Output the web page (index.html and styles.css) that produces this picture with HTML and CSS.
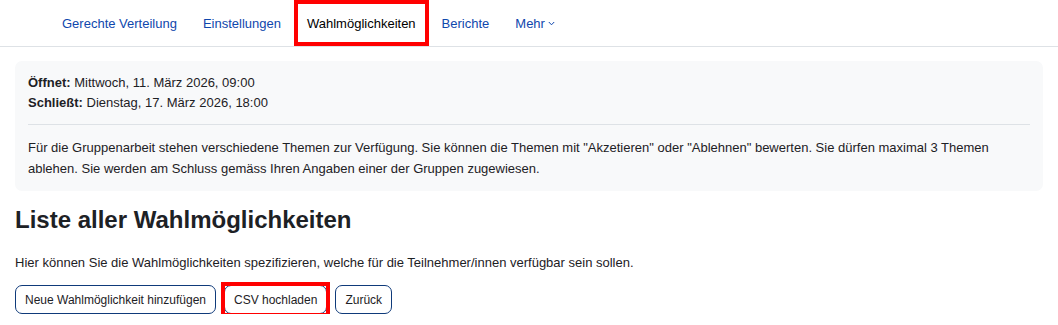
FILE: index.html
```html
<!DOCTYPE html>
<html lang="de">
<head>
  <meta charset="UTF-8" />
  <title>Wahlmöglichkeiten</title>
  <link rel="stylesheet" href="styles.css">
</head>
<body>

<nav class="secondary-nav">
  <ul>
    <li><a href="#">Gerechte Verteilung</a></li>
    <li><a href="#">Einstellungen</a></li>
    <li><a href="#" class="active marked">Wahlmöglichkeiten</a></li>
    <li><a href="#">Berichte</a></li>
    <li><a href="#">Mehr <span class="caret"><svg width="7" height="5" viewBox="0 0 7 5"><path d="M0.8 1 L3.5 3.8 L6.2 1" fill="none" stroke="currentColor" stroke-width="1"/></svg></span></a></li>
  </ul>
</nav>

<main>
  <div class="activity-info">
    <div class="dates">
      <div><strong>Öffnet:</strong> Mittwoch, 11. März 2026, 09:00</div>
      <div><strong>Schließt:</strong> Dienstag, 17. März 2026, 18:00</div>
    </div>
    <hr>
    <p>Für die Gruppenarbeit stehen verschiedene Themen zur Verfügung. Sie können die Themen mit "Akzetieren" oder "Ablehnen" bewerten. Sie dürfen maximal 3 Themen ablehen. Sie werden am Schluss gemäss Ihren Angaben einer der Gruppen zugewiesen.</p>
  </div>

  <h2>Liste aller Wahlmöglichkeiten</h2>
  <p class="intro">Hier können Sie die Wahlmöglichkeiten spezifizieren, welche für die Teilnehmer/innen verfügbar sein sollen.</p>

  <div class="actions">
    <button class="btn">Neue Wahlmöglichkeit hinzufügen</button>
    <span class="marked-wrap"><button class="btn">CSV hochladen</button></span>
    <button class="btn">Zurück</button>
  </div>
</main>

</body>
</html>
```

FILE: styles.css
```css
:root {
  --text-color: #1d2125;
  --link-color: #0f47ad;
  --border-light: #dee2e6;
  --box-bg: #f8f9fa;
  --mark: #ff0000;
}

body {
  margin: 0;
  font-family: "Liberation Sans", Arial, sans-serif;
  font-size: 13px;
  color: var(--text-color);
  background: #fff;
}

.secondary-nav {
  border-bottom: 1px solid var(--border-light);
}

.secondary-nav ul {
  list-style: none;
  margin: 0;
  padding: 0 0 0 49px;
  display: flex;
}

.secondary-nav a {
  display: flex;
  align-items: center;
  height: 46px;
  padding: 0 13px 0 13px;
  color: var(--link-color);
  text-decoration: none;
  box-sizing: border-box;
}

.secondary-nav a.active {
  color: #000;
}

.marked {
  outline: 4px solid var(--mark);
  outline-offset: -4px;
}

.caret {
  display: inline-flex;
  margin-left: 3px;
  margin-top: 1px;
}

main {
  padding: 14px 15px 0 15px;
}

.activity-info {
  background: var(--box-bg);
  border-radius: 7px;
  padding: 12px 13px 12px 13px;
}

.dates {
  line-height: 20px;
}

.activity-info hr {
  border: 0;
  border-top: 1px solid var(--border-light);
  margin: 11px 0 12px 0;
}

.activity-info p {
  margin: 0;
  line-height: 21px;
}

h2 {
  font-size: 24px;
  font-weight: bold;
  margin: 14px 0 0 0;
  line-height: 30px;
}

.intro {
  margin: 19px 0 0 0;
  line-height: 18px;
}

.actions {
  display: flex;
  gap: 8px;
  margin-top: 13px;
  align-items: center;
}

.btn {
  font-family: inherit;
  font-size: 12px;
  color: var(--text-color);
  background: #fff;
  border: 1px solid #0f3a7a;
  border-radius: 7px;
  padding: 0 9px;
  height: 29px;
}

.marked-wrap {
  display: inline-flex;
  outline: 4px solid var(--mark);
  outline-offset: -1px;
}
```
